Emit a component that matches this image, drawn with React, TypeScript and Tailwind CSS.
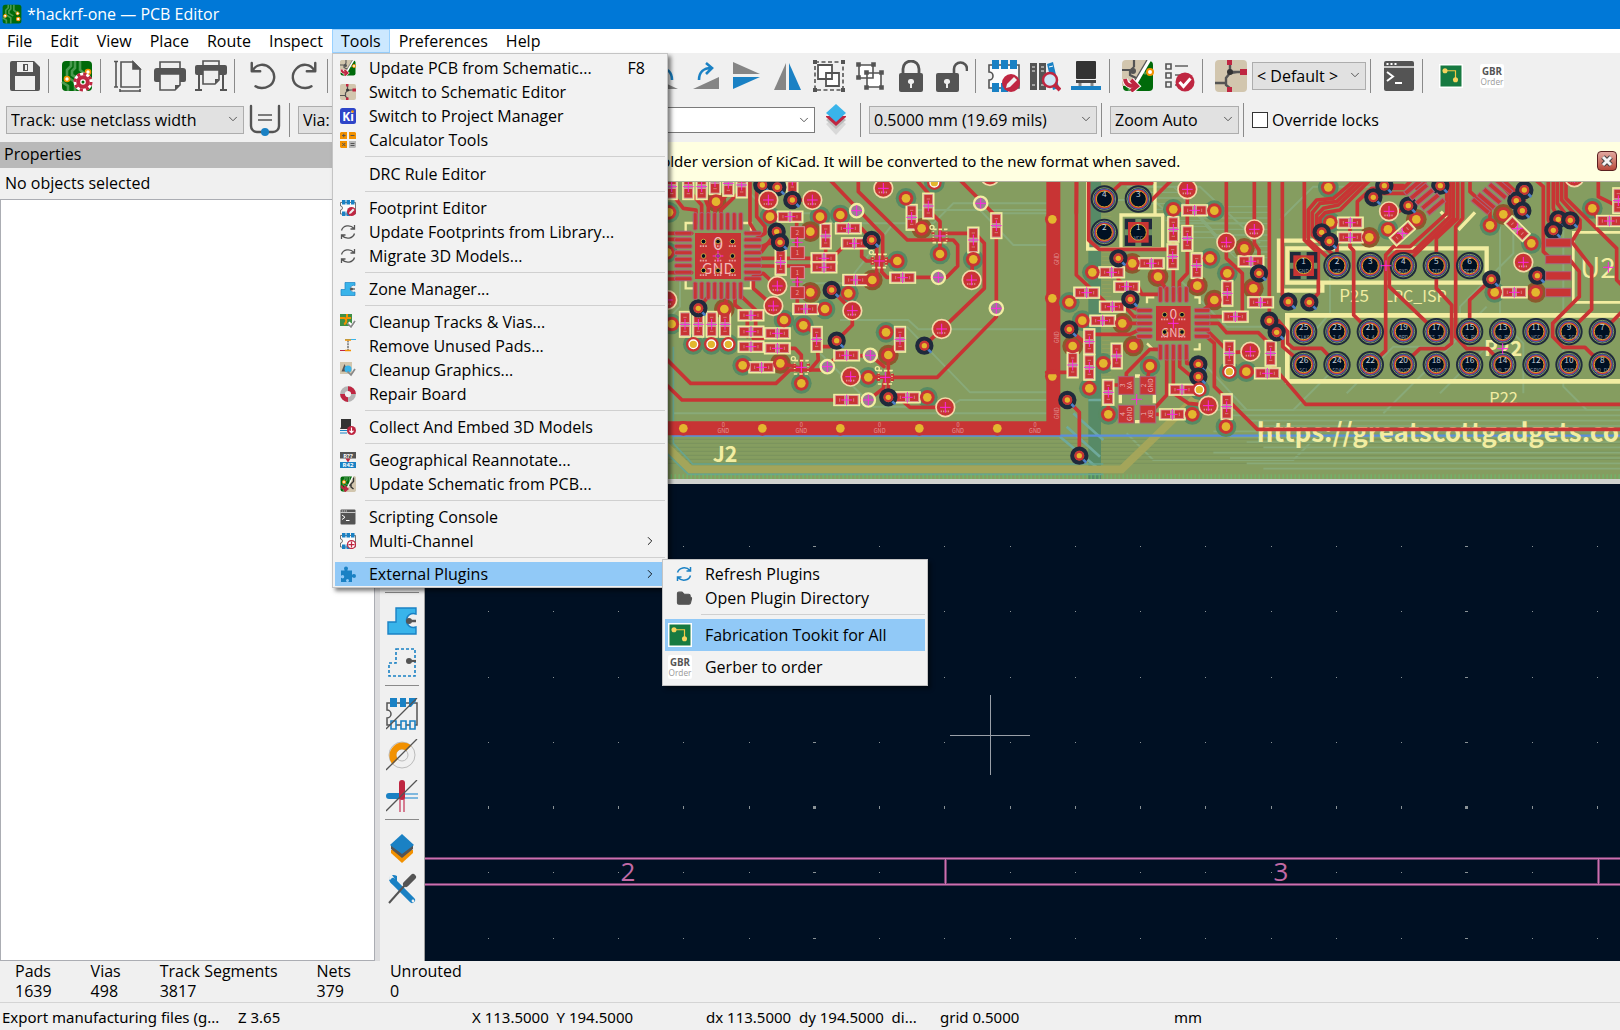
import type { FC, ReactNode } from "react";
import { ChevronDown, ChevronRight, FolderOpen, RefreshCw, Search, ZoomIn, ZoomOut } from "lucide-react";

const DARK = "#545454";
const BLUE = "#1a81c4";
const SKY = "#39b4ea";
const RED = "#bf2641";
const ORANGE = "#f29100";

type Pt = [number, number];

const boardArt = (
  <>
    <rect x="1" y="1" width="30" height="30" rx="4" fill="#006a0a" />
    <path d="M10 1v5l-4 4v7l8 5v9M14 1v7l-3 3v4l7 4M19 1v9l5 4M1 22l6 4v5" stroke="#4a9a4f" strokeWidth="2.6" fill="none" />
  </>
);

const schArt = <rect width="32" height="32" rx="4" fill="#d2c6ae" />;

const footprintArt = (
  <>
    <path d="M5 5H1v7a4 4 0 0 1 0 8v8h30V5z" fill="#fbfbfb" stroke={DARK} strokeWidth="1.6" />
    <path d="M4 0h7v9H4zM13 0h7v9h-7zM22 0h7v9h-7zM4 23h7v9H4zM13 23h7v9h-7z" fill={BLUE} />
  </>
);

const icons: Record<string, ReactNode> = {
  save: (
    <>
      <path d="M3 1h22l6 6v22a2 2 0 0 1-2 2H3a2 2 0 0 1-2-2V3a2 2 0 0 1 2-2z" fill={DARK} />
      <path d="M8 2h16v10H8zM6 16h20v14H6z" fill="#efefef" />
      <path d="M14 4h5v7h-5z" fill={DARK} />
      <path d="M16 5h2v5h-2z" fill="#efefef" />
    </>
  ),
  boardSetup: (
    <>
      {boardArt}
      <circle cx="6" cy="19" r="2.5" fill="#fff" stroke={ORANGE} strokeWidth="1.6" />
      <circle cx="27" cy="12" r="2.5" fill="#fff" stroke={ORANGE} strokeWidth="1.6" />
      <circle cx="22" cy="22" r="5.5" fill="none" stroke="#fff" strokeWidth="8" />
      <circle cx="22" cy="22" r="8" fill="none" stroke={RED} strokeWidth="3" strokeDasharray="3.2 3.08" />
      <circle cx="22" cy="22" r="4.8" fill="none" stroke={RED} strokeWidth="4" />
    </>
  ),
  board: (
    <>
      {boardArt}
      <circle cx="5" cy="19" r="2.4" fill="#fff" stroke={ORANGE} strokeWidth="1.6" />
      <circle cx="26" cy="24" r="2.8" fill="#fff" stroke={ORANGE} strokeWidth="1.8" />
      <circle cx="25" cy="15" r="2.4" fill="#fff" stroke={ORANGE} strokeWidth="1.6" />
    </>
  ),
  page: (
    <g fill="none" stroke={DARK} strokeWidth="1.6">
      <path d="M8 2h12l7 7v18H8z" />
      <path d="M20 2v7h7z" fill={DARK} />
      <path d="M3 2v25M1 1.500h4M1 27h4M7 31h20M7 29v3M27 29v3" />
    </g>
  ),
  print: (
    <>
      <path d="M6 2h20v7H6z" fill="#efefef" stroke={DARK} strokeWidth="1.6" />
      <path d="M3 8h26a3 3 0 0 1 3 3v9a2 2 0 0 1-2 2H2a2 2 0 0 1-2-2v-9a3 3 0 0 1 3-3z" fill={DARK} />
      <path d="M6 14h20v11l-5 5H6z" fill="#efefef" stroke={DARK} strokeWidth="1.600" />
      <path d="M26 25h-5v5z" fill={DARK} />
    </>
  ),
  plot: (
    <>
      <path d="M8 1h16v5H8z" fill="#efefef" stroke={DARK} strokeWidth="1.6" />
      <path d="M2 5h28a2 2 0 0 1 2 2v6a2 2 0 0 1-2 2H2a2 2 0 0 1-2-2V7a2 2 0 0 1 2-2z" fill={DARK} />
      <path d="M4 14v15M28 14v15M0 30h7M25 30h7" stroke={DARK} strokeWidth="2" />
      <path d="M8 10h16v10l-4 4H8z" fill="#efefef" stroke={DARK} strokeWidth="1.6" />
      <path d="M24 19h-4v5z" fill={DARK} />
    </>
  ),
  undo: (
    <g fill="none" stroke={DARK} strokeWidth="2.600" strokeLinecap="round" strokeLinejoin="round">
      <path d="M4 2v9h9" />
      <path d="M5 10C9 3 18 2 24 8c6 6 5 15-2 19-5 3-11 2-14 0" />
    </g>
  ),
  redo: (
    <g fill="none" stroke={DARK} strokeWidth="2.600" strokeLinecap="round" strokeLinejoin="round">
      <path d="M28 2v9h-9" />
      <path d="M27 10C23 3 14 2 8 8c-6 6-5 15 2 19 5 3 11 2 14 0" />
    </g>
  ),
  rotateCcw: (
    <>
      <path d="M3 17v12h26z" fill="#858585" />
      <path d="M23 20c0-8-5-12-12-12M16 3l-6 5 6 6" fill="none" stroke={BLUE} strokeWidth="2.600" />
    </>
  ),
  rotateCw: (
    <>
      <path d="M29 17v12H3z" fill="#858585" />
      <path d="M9 20c0-8 5-12 12-12M16 3l6 5-6 6" fill="none" stroke={BLUE} strokeWidth="2.600" />
    </>
  ),
  mirrorV: (
    <>
      <path d="M2 2l27 12H2z" fill="#858585" />
      <path d="M2 29V17h27z" fill={BLUE} />
    </>
  ),
  mirrorH: (
    <>
      <path d="M14 3v27H2z" fill="#858585" />
      <path d="M17 3v27h12z" fill={BLUE} />
    </>
  ),
  group: (
    <>
      <path d="M2 2h28v28H2z" fill="none" stroke={DARK} strokeWidth="1.600" strokeDasharray="4 2.500" />
      <path d="M0 0h4v4H0zM28 0h4v4h-4zM0 28h4v4H0zM28 28h4v4h-4z" fill={DARK} />
      <path d="M5 5h14v14H5zM13 13h13v13H13z" fill="#fff" stroke={DARK} strokeWidth="1.8" />
    </>
  ),
  ungroup: (
    <g fill="#fff" stroke={DARK} strokeWidth="1.6">
      <path d="M5 5h14v13H5zM13 13h14v14H13z" />
      <path d="M3 3h3v3H3zM18 3h3v3h-3zM3 16h3v3H3zM11 11h3v3h-3zM26 11h3v3h-3zM11 26h3v3h-3zM26 26h3v3h-3z" fill={DARK} />
    </g>
  ),
  lock: (
    <>
      <path d="M8 15V9a8 8 0 0 1 16 0v6" fill="none" stroke={DARK} strokeWidth="2.800" />
      <rect x="4" y="13" width="24" height="19" rx="2" fill={DARK} />
      <path d="M16 19a2.500 2.500 0 0 1 1 5v4h-2v-4a2.500 2.500 0 0 1 1-5z" fill="#efefef" />
    </>
  ),
  unlock: (
    <>
      <path d="M18 15V9a6.500 6.500 0 0 1 13 0v2" fill="none" stroke={DARK} strokeWidth="2.600" />
      <rect x="0" y="13" width="23" height="19" rx="2" fill={DARK} />
      <path d="M11 19a2.500 2.500 0 0 1 1 5v4h-2v-4a2.500 2.500 0 0 1 1-5z" fill="#efefef" />
    </>
  ),
  footprintEditor: (
    <>
      {footprintArt}
      <circle cx="23" cy="23" r="9" fill={RED} />
      <path d="M18 28l1-4 7-7 3 3-7 7z" fill="#efefef" />
    </>
  ),
  library: (
    <>
      <path d="M1 3h7v27H1zM10 3h7v27h-7z" fill={DARK} />
      <path d="M3 7h3M3 11h3M3 25h3M12 7h3M12 11h3M12 25h3" stroke="#efefef" strokeWidth="1.200" />
      <path d="M18 4l6-2 6 26-6 2z" fill={BLUE} />
      <path d="M20 7l4-1" stroke="#fff" />
      <circle cx="21" cy="20" r="7" fill="#cfe6f5" stroke={RED} strokeWidth="2.500" />
      <path d="M26 25l5 5" stroke={RED} strokeWidth="4" />
    </>
  ),
  chip3d: (
    <>
      <path d="M7 1h18a1 1 0 0 1 1 1v16a1 1 0 0 1-1 1H7a1 1 0 0 1-1-1V2a1 1 0 0 1 1-1z" fill="#333" />
      <path d="M6 20h20v3H6z" fill="#444" />
      <path d="M10 23v3M22 23v3" stroke="#888" strokeWidth="3" />
      <path d="M1 26h30v4H1z" fill={BLUE} />
    </>
  ),
  updatePcb: (
    <>
      {boardArt}
      <path d="M4 0h22L10 26H0V4a4 4 0 0 1 4-4z" fill="#d2c6ae" />
      <path d="M0 10h8M12 0v7M12 7l-4 4v4l6 3" fill="none" stroke={DARK} strokeWidth="2.200" />
      <circle cx="11" cy="11" r="3" fill={DARK} />
      <path d="M27 0L10 29" stroke="#fff" strokeWidth="4" />
      <path d="M25 0L9 27" stroke={DARK} strokeWidth="1.300" />
      <circle cx="28" cy="12" r="3" fill="#fff" stroke={ORANGE} strokeWidth="2" />
      <path d="M3 19c1 6 4 7 9 7M9 20l6 6-6 5" fill="none" stroke="#fff" strokeWidth="6" />
      <path d="M3 19c1 6 4 7 9 7M9 20l6 6-6 5" fill="none" stroke={RED} strokeWidth="4" />
    </>
  ),
  updateSch: (
    <>
      {boardArt}
      <path d="M26 0L10 32h18a4 4 0 0 0 4-4V4a4 4 0 0 0-4-4z" fill="#d2c6ae" />
      <path d="M27 3v8l-5 5v6l5 4M22 18h-6" fill="none" stroke="#333" strokeWidth="2.800" />
      <path d="M26 0L12 29" stroke="#fff" strokeWidth="2.500" />
      <circle cx="8" cy="12" r="3" fill="#fff" stroke={ORANGE} strokeWidth="2" />
      <path d="M3 19c1 6 4 7 9 7M9 20l6 6-6 5" fill="none" stroke={RED} strokeWidth="4" />
    </>
  ),
  checklist: (
    <>
      <path d="M3 4h5v5H3zM3 13h5v5H3zM3 22h5v5H3z" fill="none" stroke={DARK} strokeWidth="1.600" />
      <path d="M12 6h13M12 15h8M12 25h4" stroke="#858585" strokeWidth="1.800" />
      <circle cx="22" cy="22" r="9.500" fill={RED} />
      <path d="M16.500 22l4 4.500 7-8" fill="none" stroke="#fff" strokeWidth="3" />
    </>
  ),
  schematic: (
    <>
      {schArt}
      <path d="M0 23h12M15 4v9l7-1M15 13l-4 5v7l5 4M17 12h12" fill="none" stroke={DARK} strokeWidth="2.400" />
      <circle cx="15" cy="12" r="3" fill="#333" />
      <path d="M12 0h5v5h-5zM25 9h7v6h-7zM12 27h5v5h-5z" fill={RED} />
    </>
  ),
  console: (
    <>
      <path d="M3 1h26a2 2 0 0 1 2 2v26a2 2 0 0 1-2 2H3a2 2 0 0 1-2-2V3a2 2 0 0 1 2-2z" fill={DARK} />
      <path d="M1 7h30" stroke="#efefef" strokeWidth="1.500" />
      <path d="M3.500 4h2M7.500 4h2M11.500 4h2M4 12l6 4.500L4 21M12 23h7" fill="none" stroke="#fff" strokeWidth="2" />
    </>
  ),
  fabrication: (
    <>
      <rect width="32" height="32" fill="#fff" />
      <rect x="2" y="2" width="28" height="28" fill="#177a41" />
      <path d="M8 9h14v12" fill="none" stroke="#f5c842" strokeWidth="1.600" />
      <circle cx="8" cy="9" r="3.400" fill="#f7d35e" />
      <circle cx="22" cy="21" r="3.400" fill="#f7d35e" />
    </>
  ),
  gerber: (
    <>
      <rect width="32" height="32" rx="3" fill="#fff" />
      <text x="16" y="14" textAnchor="middle" fontSize="13" fontWeight="700" fill="#555">GBR</text>
      <text x="16" y="28" textAnchor="middle" fontSize="11" fill="#999">Order</text>
    </>
  ),
  kicad: (
    <>
      <rect width="32" height="32" rx="5" fill="#2e45c8" />
      <text x="16" y="25" textAnchor="middle" fontSize="24" fontWeight="700" fill="#fff">Ki</text>
      <circle cx="25" cy="7" r="2.500" fill={ORANGE} />
    </>
  ),
  calculator: (
    <>
      <path d="M2 0h12v14H0V2zM18 0h12l2 2v12H18zM0 18h14v14H2l-2-2z" fill={ORANGE} />
      <path d="M18 18h14v12l-2 2H18z" fill="#b8b8b8" />
      <path d="M4 7h7M7.500 3.500v7M21 7h8M4.500 22l6 6M10.500 22l-6 6M21 23h8M21 27h8" stroke={DARK} strokeWidth="2" />
    </>
  ),
  refresh: (
    <g fill="none" stroke={DARK} strokeWidth="2.600">
      <path d="M3 13C6 3 20 0 28 9M29 2v8h-8M29 19c-3 10-17 13-25 4M3 30v-8h8" />
    </g>
  ),
  refreshBlue: (
    <g fill="none" stroke={BLUE} strokeWidth="3">
      <path d="M3 13C6 3 20 0 28 9M29 2v8h-8M29 19c-3 10-17 13-25 4M3 30v-8h8" />
    </g>
  ),
  puzzle: (
    <path
      d="M2 9h7c1-1-1-2-1-4a4 4 0 0 1 8 0c0 2-2 3-1 4h9v8c1 1 2-1 4-1a4 4 0 0 1 0 8c-2 0-3-2-4-1v9h-7c-1-1 1-2 1-3a3 3 0 0 0-6 0c0 1 2 2 1 3H2v-8c1-1 2 1 3 1a3 3 0 0 0 0-7c-1 0-2 2-3 1z"
      fill={BLUE}
    />
  ),
  zone: (
    <>
      <path d="M10 3h20v6a7 7 0 1 0 0 13v7H2V17h8z" fill={SKY} stroke={BLUE} strokeWidth="1.400" />
      <path d="M22 16h8" stroke={DARK} strokeWidth="2.500" />
      <circle cx="23" cy="16" r="3" fill={DARK} />
    </>
  ),
  zoneOutline: (
    <>
      <path d="M10 3h19v27H3V17h7z" fill="none" stroke={BLUE} strokeWidth="1.600" strokeDasharray="3 2" />
      <path d="M22 15h8" stroke={DARK} strokeWidth="2.200" />
      <circle cx="23" cy="15" r="3" fill={DARK} />
    </>
  ),
  cleanTracks: (
    <>
      <path d="M0 0h24v24H0z" fill="#3f8f45" />
      <path d="M0 8h8c6 0 6 10 0 12M14 0v8h8" fill="none" stroke={ORANGE} strokeWidth="4" />
      <path d="M17 17l8 9M20 28l10-13" stroke="#fff" strokeWidth="6" />
      <path d="M15 19l7 7 8-12" fill="none" stroke="#888" strokeWidth="3.500" />
    </>
  ),
  cleanGraphics: (
    <>
      <path d="M0 0h24v24H0z" fill="#d2c6ae" />
      <path d="M3 19L9 4l7 15z" fill={DARK} />
      <circle cx="16" cy="14" r="7" fill={SKY} />
      <path d="M15 19l7 7 8-12" fill="none" stroke="#888" strokeWidth="3.500" />
    </>
  ),
  unusedPads: (
    <>
      <path d="M16 5v22" stroke="#858585" strokeWidth="3.500" strokeDasharray="4 1.500" />
      <path d="M10 3h22" stroke={SKY} strokeWidth="2" />
      <path d="M0 25h22" stroke={RED} strokeWidth="2" />
      <path d="M10 4h12M10 25h12" stroke={ORANGE} strokeWidth="3" />
    </>
  ),
  repair: (
    <g fill="none" strokeWidth="9.500">
      <circle cx="16" cy="16" r="11" stroke="#b4b4b4" />
      <path d="M16 5a11 11 0 0 1 11 11M16 27A11 11 0 0 1 5 16" stroke={RED} />
    </g>
  ),
  embed: (
    <>
      <path d="M2 0h20v16l2 4H0l2-4z" fill="#333" />
      <path d="M0 23h20M0 28h14" stroke={BLUE} strokeWidth="2" />
      <circle cx="23" cy="23" r="9" fill={RED} />
      <path d="M23 17v10M19 23.500l4 4 4-4" fill="none" stroke="#fff" strokeWidth="2.200" />
    </>
  ),
  reannotate: (
    <>
      <rect width="32" height="13" fill={DARK} />
      <rect y="20" width="32" height="12" fill={BLUE} />
      <text x="16" y="11" textAnchor="middle" fontSize="12" fontWeight="700" fill="#fff">R??</text>
      <text x="16" y="30.500" textAnchor="middle" fontSize="12" fontWeight="700" fill="#fff">R42</text>
      <path d="M11 13h10l-5 8z" fill={RED} />
    </>
  ),
  multiChannel: (
    <>
      {footprintArt}
      <circle cx="23" cy="23" r="8" fill="#fff" stroke={RED} strokeWidth="2.500" />
      <path d="M23 17v12M17 23h12" stroke={RED} strokeWidth="2.500" />
    </>
  ),
  footprintOff: (
    <>
      <path d="M5 5H1v7a4 4 0 0 1 0 8v7h30V5z" fill="none" stroke={DARK} strokeWidth="1.500" />
      <path d="M4 0h7v9H4zM14 0h6v9h-6zM23 0h7v3l-5 6h-2z" fill={BLUE} />
      <path d="M5 23h5v8H5zM15 23h5v8h-5zM24 23h5v8h-5z" fill="#efefef" stroke={BLUE} strokeWidth="1.600" />
      <path d="M0 31L31 0" stroke={DARK} strokeWidth="1.300" />
    </>
  ),
  viaOff: (
    <>
      <circle cx="16" cy="16" r="13" fill="none" stroke="#bbb" />
      <circle cx="16" cy="16" r="6" fill="none" stroke="#bbb" />
      <path d="M6.500 25.500a13.500 13.500 0 0 1 19-19l-5.500 5.500a5.500 5.500 0 0 0-8 8z" fill={ORANGE} />
      <path d="M0 31L31 0" stroke={DARK} strokeWidth="1.300" />
    </>
  ),
  trackOff: (
    <>
      <path d="M16 14h16M16 18h16" stroke="#5aa5d8" strokeWidth="1.600" />
      <path d="M14 17v15M18 17v15" stroke="#d0607a" strokeWidth="1.600" />
      <path d="M3 16h12" stroke={BLUE} strokeWidth="6" strokeLinecap="round" />
      <path d="M16 3v14" stroke={RED} strokeWidth="6" strokeLinecap="round" />
      <path d="M0 31L31 0" stroke={DARK} strokeWidth="1.300" />
    </>
  ),
  layers: (
    <>
      <path d="M5 18v3l11 10 11-10v-3z" fill={ORANGE} />
      <path d="M5 13v4l11 9 11-9v-4z" fill={DARK} />
      <path d="M16 2l12 11-12 9L4 13z" fill={BLUE} />
    </>
  ),
  layerPair: (
    <>
      <path d="M6 20l10-8 10 8-10 11z" fill="#d8d8d8" />
      <path d="M6 16l10-8 10 8-10 9z" fill="#bcbcbc" />
      <path d="M6 13l10 9 10-9v-1H6z" fill={RED} />
      <path d="M16 0l10 9-10 9L6 9z" fill={SKY} />
    </>
  ),
  toolsCross: (
    <>
      <path d="M7 8l19 19" stroke={BLUE} strokeWidth="6" strokeLinecap="round" />
      <path d="M4 3a7 7 0 0 0 9 9l-2-3V3a7 7 0 0 0-5-1l3 4-2 3-4-1z" fill={BLUE} />
      <circle cx="27" cy="28" r="1.400" fill="#efefef" />
      <path d="M3 30l16-18" stroke={DARK} strokeWidth="2" />
      <path d="M20 11l7-7" stroke={DARK} strokeWidth="6" strokeLinecap="round" />
    </>
  ),
  trackWidth: (
    <>
      <path d="M2 2v20a6 6 0 0 0 6 6h16a6 6 0 0 0 6-6V2" fill="none" stroke={DARK} strokeWidth="2.400" strokeLinecap="round" />
      <path d="M9 11h14M9 16h14" stroke={DARK} strokeWidth="1.600" />
      <circle cx="16" cy="28" r="4" fill={BLUE} />
    </>
  ),
};

const Icon: FC<{ name: string; size: number }> = ({ name, size }) => (
  <svg width={size} height={size} viewBox="0 0 32 32" className="shrink-0" aria-hidden="true">
    {icons[name]}
  </svg>
);

const ToolButton: FC<{ label: string; children: ReactNode }> = ({ label, children }) => (
  <button aria-label={label} className="flex h-[41px] w-[41px] shrink-0 items-center justify-center text-[#545454]">
    {children}
  </button>
);

const Sep: FC = () => <span className="ml-[3px] mr-[7px] h-[34px] w-px shrink-0 bg-[#8a8a8a]" />;
const WideSep: FC = () => <span className="ml-1 mr-2 h-[34px] w-px shrink-0 bg-[#8a8a8a]" />;
const RowSep: FC = () => <span className="mb-[7px] mt-[3px] h-px w-[34px] shrink-0 bg-[#8a8a8a]" />;

interface ComboProps {
  label: string;
  value: string;
  className: string;
}

const Combo: FC<ComboProps> = ({ label, value, className }) => (
  <div className={`relative shrink-0 ${className}`}>
    <select aria-label={label} className="h-full w-full appearance-none border border-[#adadad] bg-[#e1e1e1] pl-1 pr-6">
      <option>{value}</option>
    </select>
    <ChevronDown size={14} strokeWidth={1.5} className="pointer-events-none absolute right-1 top-1.5 text-[#444]" />
  </div>
);

interface MenuEntry {
  label: string;
  icon?: string;
  keys?: string;
  sub?: boolean;
}

const menuGroups: MenuEntry[][] = [
  [
    { label: "Update PCB from Schematic...", icon: "updatePcb", keys: "F8" },
    { label: "Switch to Schematic Editor", icon: "schematic" },
    { label: "Switch to Project Manager", icon: "kicad" },
    { label: "Calculator Tools", icon: "calculator" },
  ],
  [{ label: "DRC Rule Editor" }],
  [
    { label: "Footprint Editor", icon: "footprintEditor" },
    { label: "Update Footprints from Library...", icon: "refresh" },
    { label: "Migrate 3D Models...", icon: "refresh" },
  ],
  [{ label: "Zone Manager...", icon: "zone" }],
  [
    { label: "Cleanup Tracks & Vias...", icon: "cleanTracks" },
    { label: "Remove Unused Pads...", icon: "unusedPads" },
    { label: "Cleanup Graphics...", icon: "cleanGraphics" },
    { label: "Repair Board", icon: "repair" },
  ],
  [{ label: "Collect And Embed 3D Models", icon: "embed" }],
  [
    { label: "Geographical Reannotate...", icon: "reannotate" },
    { label: "Update Schematic from PCB...", icon: "updateSch" },
  ],
  [
    { label: "Scripting Console", icon: "console" },
    { label: "Multi-Channel", icon: "multiChannel", sub: true },
  ],
];

const MenuRule: FC = () => (
  <div className="flex h-[9px] items-center pl-[30px]">
    <span className="h-px w-full bg-[#d0d0d0]" />
  </div>
);

const MenuRow: FC<{ entry: MenuEntry }> = ({ entry }) => (
  <button role="menuitem" className={`flex w-full items-center pl-[5px] pr-2 text-left ${entry.icon ? "h-6" : "h-[26px]"}`}>
    <span className="w-[29px]">{entry.icon && <Icon name={entry.icon} size={16} />}</span>
    <span className="flex-1">{entry.label}</span>
    {entry.keys && <span className="pr-3">{entry.keys}</span>}
    {entry.sub && <ChevronRight size={14} strokeWidth={1.5} />}
  </button>
);

const PluginsMenu: FC = () => (
  <div role="menu" className="absolute left-[327px] -top-[3px] z-30 w-[266px] border border-[#c4c4c4] bg-[#f2f2f2] p-0.5 shadow-[3px_3px_4px_rgba(0,0,0,0.4)]">
    <button role="menuitem" className="flex h-6 w-full items-center pl-[11px] text-left">
      <span className="w-[29px]">
        <Icon name="refreshBlue" size={16} />
      </span>
      Refresh Plugins
    </button>
    <button role="menuitem" className="flex h-6 w-full items-center pl-[11px] text-left">
      <span className="w-[29px]">
        <FolderOpen size={17} fill="#545454" stroke="#545454" strokeWidth={1.5} />
      </span>
      Open Plugin Directory
    </button>
    <div className="flex h-[9px] items-center pl-9">
      <span className="h-px w-full bg-[#d0d0d0]" />
    </div>
    <button role="menuitem" className="flex h-8 w-full items-center bg-[#91c9f7] pl-[3px] text-left">
      <span className="w-[37px]">
        <Icon name="fabrication" size={24} />
      </span>
      Fabrication Tookit for All
    </button>
    <button role="menuitem" className="flex h-8 w-full items-center pl-[3px] text-left">
      <span className="w-[37px]">
        <Icon name="gerber" size={24} />
      </span>
      Gerber to order
    </button>
  </div>
);

const ToolsMenu: FC = () => (
  <div role="menu" className="absolute left-0 top-full z-20 w-[336px] border border-[#c4c4c4] bg-[#f2f2f2] px-0.5 pb-px pt-0.5 shadow-[3px_3px_4px_rgba(0,0,0,0.5)]">
    {menuGroups.map((group, i) => (
      <div key={i}>
        {group.map((entry) => (
          <MenuRow key={entry.label} entry={entry} />
        ))}
        <MenuRule />
      </div>
    ))}
    <div className="relative">
      <button role="menuitem" className="flex h-6 w-full items-center bg-[#91c9f7] pl-[5px] pr-2 text-left">
        <span className="w-[29px]">
          <Icon name="puzzle" size={16} />
        </span>
        <span className="flex-1">External Plugins</span>
        <ChevronRight size={14} strokeWidth={1.5} />
      </button>
      <PluginsMenu />
    </div>
  </div>
);

/* ---------- board drawing ---------- */

type ViaKind = "g" | "o" | "d" | "w" | "b";
type Hole = [number, number, string, string?];

interface Section {
  dx: number;
  tracks: string[];
  vias: Partial<Record<ViaKind, Pt[]>>;
  testPads: Pt[];
  rings?: Pt[];
  flat: Pt[];
  upright: Pt[];
}

const sections: Section[] = [
  {
    dx: 0,
    tracks: [
      "0,518 92,610 348,610 390,570 500,570", "0,596 66,660 625,660 670,625 676,592 832,592 1009,410 1009,110 900,0",
      "845,448 973,325 973,190 945,160 840,160 840,125 805,90 805,40 770,0", "793,497 845,448", "510,0 668,165 668,240",
      "595,0 595,35 742,180 840,180 880,180 893,195 893,258 860,292 680,292 665,275 665,250", "305,235 490,235 525,225 560,190 605,190 605,230 620,243 712,243",
      "305,258 490,258", "565,145 605,145 635,180 650,200 650,290 637,300 590,300", "515,330 577,392 577,435 530,482 510,500 470,500",
      "248,556 305,562 361,550 424,565 424,610", "352,505 405,505 424,525 424,565", "470,480 475,540 450,570", "502,560 530,530 631,526 672,560",
      "720,480 685,525 685,652 802,652", "715,652 750,682 856,682", "280,290 310,280 350,318", "280,290 280,325 340,378", "305,215 350,155", "305,200 325,190 360,187",
      "270,0 270,130 285,155", "290,0 290,110 315,140 315,160 285,178", "225,330 225,375 262,405 262,470", "245,350 287,390 287,450", "397,0 397,60 457,60",
      "115,385 145,350", "193,387 203,340", "0,160 95,160", "0,278 95,278", "0,297 60,297", "0,178 50,178", "35,40 70,85 108,90 108,130", "85,30 125,75 125,110",
      "125,30 145,80 145,110", "245,30 183,90 183,120", "205,40 165,80 165,110", "330,110 410,105 410,235", "412,260 412,385 495,387", "430,436 465,460 470,478",
      "372,420 372,460 310,475 280,475", "738,55 755,90 755,130 785,145", "935,300 940,180", "480,110 497,140 497,235", "572,590 676,592", "325,60 290,60", "840,160 840,222",
    ],
    vias: {
      g: [[27, 97], [330, 110], [480, 110], [541, 105], [738, 55], [840, 222], [712, 243], [940, 238], [565, 340], [495, 387], [372, 420], [430, 436], [35, 432], [248, 556], [424, 610], [625, 592], [678, 457], [802, 652], [22, 217]],
      o: [[168, 65], [451, 155], [451, 337], [637, 300], [193, 387], [785, 145], [361, 550], [685, 525]],
      d: [[350, 155], [360, 187], [397, 60], [307, 15], [352, 22], [515, 330], [530, 482], [635, 180], [793, 497], [685, 652], [115, 385]],
      w: [[100, 493], [154, 493], [205, 493], [823, 8]],
      b: [[70, 745], [307, 745], [541, 745], [778, 745], [1012, 745], [1177, 118], [1177, 355], [1177, 589]],
    },
    testPads: [[325, 60], [457, 60], [670, 25], [935, 300], [352, 318], [340, 378], [577, 392], [845, 447], [572, 590], [856, 682], [22, 360], [990, -12]],
    rings: [[590, 92], [962, 70], [835, 292], [1009, 385], [502, 560], [631, 526], [625, 660]],
    flat: [[390, 110], [565, 145], [583, 190], [587, 300], [728, 293], [437, 387], [352, 460], [352, 505], [305, 562], [560, 526], [560, 660], [742, 652], [273, 406], [492, 235], [492, 262], [273, 455], [273, 500]],
    upright: [[497, 168], [362, 247], [470, 478], [720, 478], [940, 180], [1009, 137], [805, 78], [755, 112], [75, 433], [115, 433], [155, 433], [195, 433], [35, 20], [85, 20], [125, 20], [165, 5], [205, 10], [245, 15], [397, 0]],
  },
  {
    dx: 1200,
    tracks: [
      "49,0 49,285 150,380 195,380 222,410 240,410", "86,0 86,180 118,208 340,208", "133,57 183,10 275,10", "235,57 275,60 335,0", "382,30 382,280 358,305 358,340",
      "340,90 340,340", "463,92 340,90", "499,0 499,235 547,280 547,410 440,410", "583,0 583,190 597,210 597,280",
      "628,0 628,422 655,422 683,455 683,490 700,505 785,505 831,554", "667,0 667,345 685,365", "733,0 733,180 775,220 775,340 748,367",
      "410,430 475,430 500,458 595,458 632,495 640,560 737,673 1700,673", "440,470 463,490 463,620 592,748 1700,748", "440,450 508,518 570,515",
      "175,235 175,300 200,320 235,320 245,343 300,343", "211,358 211,380 240,392", "28,448 88,500 88,625", "88,463 210,463 240,448", "67,422 187,430 240,430",
      "199,615 199,580 270,508 300,508", "320,500 320,645 270,700", "340,500 340,640 385,670 445,676", "359,520 359,560 395,590 415,590", "380,520 380,550 415,553",
      "650,457 668,475 668,500 730,553", "22,660 58,697 58,827", "285,703 397,703", "145,703 145,615 180,615", "-40,577 38,577 38,500", "50,0 49,100",
      "270,558 262,600", "130,550 170,535", "412,317 410,235 450,235", "463,360 502,350 502,280", "463,365 430,390", "217,250 280,255 294,290 320,330", "97,277 155,277",
      "220,498 240,470", "553,205 573,244", "580,325 602,367", "498,740 500,660", "559,575 622,580",
    ],
    vias: {
      g: [[340, 88], [463, 92], [97, 277], [450, 235], [502, 280], [28, 367], [67, 422], [130, 550], [270, 558], [88, 625], [145, 703], [397, 703], [498, 740], [559, 575]],
      o: [[217, 250], [463, 360], [187, 430], [220, 498], [38, 498], [412, 317], [294, 290], [553, 205], [580, 325]],
      d: [[175, 235], [211, 358], [597, 280], [628, 422], [650, 457], [415, 553], [415, 590], [22, 660], [58, 827], [685, 365], [748, 367], [28, 448]],
      w: [[508, 575], [418, 629]],
    },
    testPads: [[382, 28], [499, 187], [583, 148], [571, 515], [445, 677]],
    flat: [[404, 91], [274, 250], [155, 277], [200, 320], [80, 338], [157, 380], [128, 422], [573, 244], [602, 367], [526, 410], [622, 580], [366, 629], [337, 703]],
    upright: [[340, 148], [382, 175], [338, 230], [410, 257], [502, 340], [88, 485], [88, 562], [170, 528], [38, 555], [145, 637], [508, 520], [632, 520], [500, 680]],
  },
  {
    dx: 1830,
    tracks: [
      "255,0 190,55 140,60 115,90 115,180 201,257", "270,0 200,65 150,70 127,98 127,165 201,235", "285,0 205,75 160,85 140,105 140,150 155,157", "300,0 210,90 165,98 150,115 150,155 178,184",
      "262,140 262,65 305,25 400,25 425,0", "343,17 400,17", "310,50 330,40 410,40 450,0", "415,77 385,95 360,95", "439,118 415,80", "201,257 201,190 240,172",
      "240,128 240,200 251,212 251,405 301,455", "530,0 530,100 420,200 370,200 347,225 347,512 301,554", "540,0 540,110 430,215 380,215 358,235 358,320 499,455",
      "550,0 550,115 400,257", "563,0 563,115 499,175 499,325 545,375 545,490 525,506 450,506 400,554", "578,0 578,115 557,140 557,470 590,506 655,506 698,554",
      "599,455 599,360 664,298", "600,0 600,35 660,90 660,135", "797,0 820,20 820,215 845,238 865,238", "835,0 835,120 850,150", "850,0 850,85 865,118", "862,0 862,70 901,121",
      "875,0 875,60 930,120 930,145 905,185 965,262 965,388 897,455", "888,0 888,55 1040,205 1040,300 1080,340", "865,238 900,240 928,275 928,350 848,430 848,470 880,502 945,502 997,554",
      "997,455 1080,370", "985,0 985,50 1045,80", "674,337 800,337", "760,247 802,287 865,287", "181,127 241,128", "241,172 298,172", "354,148 397,160 439,118", "700,103 784,190", "967,85 985,120 1018,123",
      "470,0 440,25", "700,0 763,60", "680,0 739,62",
    ],
    vias: {
      g: [[181, 127], [354, 148], [660, 136], [175, 22], [784, 190], [674, 337], [967, 85]],
      o: [[298, 172], [439, 118], [700, 103], [797, 337]],
      d: [[155, 157], [178, 184], [310, 52], [343, 17], [415, 77], [511, 17], [763, 30], [739, 62], [757, 92], [865, 118], [901, 121], [850, 151], [802, 287], [664, 298]],
    },
    testPads: [[357, 94], [760, 247], [913, -8]],
    flat: [[241, 128], [241, 172], [733, 337], [1018, 123]],
    upright: [[1045, 62]],
  },
];

const headerPins: Hole[] = [
  [101, 257, "1", "GND"], [201, 257, "2", "ISP"], [301, 257, "3", "x"], [400, 257, "4", "RXD"], [499, 257, "5", "TXD"], [599, 257, "6", "RESE"],
  [101, 455, "25", "CLK6"], [201, 455, "23", "2_6"], [301, 455, "21", "2_4"], [400, 455, "19", "BRD"], [499, 455, "17", "SS_TX"], [599, 455, "15", "SS_RX"], [698, 455, "13", "U0_RX"], [798, 455, "11", "VCC"], [897, 455, "9", "SS_SCK"], [997, 455, "7", "SD_D"],
  [101, 554, "26", "SCL"], [201, 554, "24", "SDA"], [301, 554, "22", "2_10"], [400, 554, "20", "BOOT"], [499, 554, "18", "GND"], [599, 554, "16", "SCK"], [698, 554, "14", "U0_TX"], [798, 554, "12", "GPIO"], [897, 554, "10", "GND"], [997, 554, "8", "SD_D2"],
];

const chips: Pt[] = [[658, 243], [840, 168], [424, 562], [676, 592]];

const COPPER = "#c83434";
const SILK = "#f2eda1";

const Via: FC<{ at: Pt; kind: ViaKind }> = ({ at: [x, y], kind }) => {
  if (kind === "d") {
    return (
      <g>
        <circle cx={x} cy={y} r="21" fill="none" stroke="#1f2a3c" strokeWidth="13" />
        <path d={`M${x + 12} ${y + 12}l9 9`} stroke="#4d7fc4" strokeWidth="8" />
        <circle cx={x} cy={y} r="15" fill={COPPER} />
        <circle cx={x} cy={y} r="8" fill="#e3b72e" />
      </g>
    );
  }
  return (
    <g>
      <circle cx={x} cy={y} r="22" fill={COPPER} />
      <circle cx={x} cy={y} r="13" fill="#e3b72e" stroke={kind === "w" ? "#fff" : "none"} strokeWidth="4" />
    </g>
  );
};

const Cross: FC<{ at: Pt }> = ({ at: [x, y] }) => <path d={`M${x - 16} ${y}h32M${x} ${y - 16}v32`} stroke="#ff26e2" strokeWidth="3" />;

const Part: FC<{ at: Pt; turn: number }> = ({ at: [x, y], turn }) => (
  <g>
    <g transform={`translate(${x} ${y}) rotate(${turn})`}>
      <rect x="-38" y="-16" width="76" height="32" fill="#a6a485" stroke={SILK} strokeWidth="5" />
      <rect x="-34" y="-13" width="28" height="26" fill={COPPER} stroke="#e0a5a8" strokeWidth="2" />
      <rect x="6" y="-13" width="28" height="26" fill={COPPER} stroke="#e0a5a8" strokeWidth="2" />
      <path d="M-21 -5v10M21 -5v10" stroke="#d97c7c" strokeWidth="3" />
    </g>
    <Cross at={[x, y]} />
  </g>
);

const TestPad: FC<{ at: Pt }> = ({ at: [x, y] }) => (
  <g>
    <circle cx={x} cy={y} r="28" fill={COPPER} stroke="#f3d9a8" strokeWidth="5" />
    <path d={`M${x - 14} ${y + 12}h28`} stroke="#df9090" strokeWidth="5" strokeDasharray="4 3" />
    <Cross at={[x, y]} />
  </g>
);

const PinHole: FC<{ pin: Hole; square?: boolean }> = ({ pin: [x, y, num, net], square }) => (
  <g>
    {square ? (
      <>
        <rect x={x - 41} y={y - 41} width="82" height="82" fill="#1f2a3c" />
        <path d={`M${x - 41} ${y}h82M${x} ${y - 41}v82`} stroke="#6d8f62" strokeWidth="18" />
        <rect x={x - 31} y={y - 31} width="62" height="62" fill={COPPER} />
      </>
    ) : (
      <>
        <circle cx={x} cy={y} r="41" fill="#1f2a3c" />
        <circle cx={x} cy={y} r="34" fill="none" stroke="#7d9a60" strokeWidth="3" />
        <circle cx={x} cy={y} r="30" fill={COPPER} stroke="#4a62b8" strokeWidth="3" />
      </>
    )}
    <circle cx={x} cy={y} r="24" fill="#001023" stroke="#d8a52c" strokeWidth="3" />
    <text x={x} y={y - 6} textAnchor="middle" fontSize="25" fill="#c6cfd8">{num}</text>
    <text x={x} y={y + 22} textAnchor="middle" fontSize="15" fill="#8795a6">{net}</text>
  </g>
);

const QuadPads: FC<{ cx: number; cy: number; half: number; gap: number; len: number; n: number; pitch: number; vias: number[] }> = ({ cx, cy, half, gap, len, n, pitch, vias }) => (
  <g>
    {Array.from({ length: n }, (_, i) => (i - (n - 1) / 2) * pitch).map((o) => (
      <g key={o} fill={COPPER} stroke="#a8627a" strokeWidth="3">
        <rect x={cx + o - 6} y={cy - half - gap - len} width="12" height={len} rx="4" />
        <rect x={cx + o - 6} y={cy + half + gap} width="12" height={len} rx="4" />
        <rect x={cx - half - gap - len} y={cy + o - 6} width={len} height="12" rx="4" />
        <rect x={cx + half + gap} y={cy + o - 6} width={len} height="12" rx="4" />
      </g>
    ))}
    <rect x={cx - half} y={cy - half} width={half * 2} height={half * 2} fill={COPPER} />
    <text x={cx} y={cy + half * 0.78} textAnchor="middle" fontSize={half * 0.66} fill="#f0b8b8">GND</text>
    <text x={cx} y={cy - half * 0.25} textAnchor="middle" fontSize={half * 0.8} fill="#f0b8b8">0</text>
    {vias.map((a) =>
      vias.map((b) => (
        <g key={`${a}:${b}`}>
          <circle cx={cx + a * half} cy={cy + b * half} r="7" fill="#001023" stroke="#c9a040" strokeWidth="3" />
          <path d={`M${cx + a * half - 11} ${cy + b * half + 14}h22`} stroke="#e4a0a0" strokeWidth="5" strokeDasharray="5 3" />
        </g>
      )),
    )}
    <Cross at={[cx, cy]} />
  </g>
);

const innerTraces = [
  "0,440 60,380 60,300", "230,0 330,100 460,100", "440,60 520,130 820,130 880,70 1160,70", "960,90 1060,195 1160,195", "760,90 1160,90", "1010,100 1160,100", "540,420 745,420 775,448 1160,448",
  "740,440 930,637 1160,637", "480,520 640,680 870,680 900,660 1160,660", "40,700 1160,700", "430,310 560,310 700,130", "1330,60 1480,60 1560,130 1780,130", "1400,20 1620,20 1800,190",
  "1560,300 1700,440 1860,440", "1640,560 1760,690 1900,690 2060,530", "1860,120 1960,20 2200,20", "2060,640 2200,500 2360,500 2480,380", "2170,700 2400,470 2400,380 2560,220 2560,60", "2340,640 2480,500",
  "1940,580 1940,480 2010,400 2010,200", "2520,140 2520,420 2590,490 2590,640", "2650,0 2650,120", "2710,150 2710,620 2780,690 2880,690", "1400,760 1480,840 1900,840 2000,740",
];

const Board: FC = () => (
  <g transform="translate(660 180) scale(0.33333)" fontFamily="'Noto Sans CJK SC','Liberation Sans',sans-serif">
    <rect x="-800" y="0" width="3900" height="912" fill="#d0d2ce" />
    <rect x="-800" y="0" width="3900" height="897" fill="#859d60" />
    <g fill="none" stroke="#89aa79" strokeWidth="6">
      {innerTraces.map((p) => (
        <polyline key={p} points={p} />
      ))}
      {Array.from({ length: 7 }, (_, i) => (
        <path key={i} d={`M-100 ${778 + i * 12}H3000`} stroke="#79935d" strokeWidth="3" />
      ))}
      {Array.from({ length: 12 }, (_, i) => (
        <path key={i} d={`M${1660 + (i % 4) * 50} ${690 + i * 16}H3000`} strokeWidth="5" />
      ))}
      {Array.from({ length: 10 }, (_, i) => (
        <path key={i} d={`M${1420 + i * 16} ${20 + i * 17}H${1540 + i * 14}l60 60H1830`} strokeWidth="4" />
      ))}
    </g>
    <rect x="1285" y="0" width="38" height="897" fill="#578a66" />
    <path d="M1200 770l120 100M1220 740l100 90M1240 700l90 80M1285 660h38" stroke="#6fa99b" strokeWidth="8" />
    <path d="M1340 0V720" stroke="#a3a55a" strokeWidth="28" strokeDasharray="2 10" opacity="0.6" />
    <path d="M0 780L90 868H1385L1620 640" fill="none" stroke="#a3a55a" strokeWidth="23" />
    <path d="M40 500V790L98 852H1330M0 800L85 883H1330" fill="none" stroke="#67a48f" strokeWidth="5" />
    <path d="M-100 890H3000" stroke="#6dbb6b" strokeWidth="14" strokeDasharray="3 9" />
    <path d="M35 767H3000" stroke="#5b8fdc" strokeWidth="7" />
    <path d="M-100 745H1180V-10" fill="none" stroke={COPPER} strokeWidth="42" />
    {[190, 424, 659, 894, 1125].map((x) => (
      <text key={x} x={x} y="760" textAnchor="middle" fontSize="17" fill="#e29a9a">
        <tspan x={x} dy="-20">0</tspan>
        <tspan x={x} dy="20">GND</tspan>
      </text>
    ))}
    {[237, 472, 700].map((y) => (
      <text key={y} x="0" y="0" transform={`translate(1196 ${y}) rotate(-90)`} textAnchor="middle" fontSize="17" fill="#e29a9a">GND</text>
    ))}

    <g fill="none" stroke={SILK} strokeWidth="10">
      <path d="M77 155v-26h28M245 129h28v26M77 300v25h28M245 325h28v-25" strokeWidth="7" />
      <path d="M1283 0V207H1508V105H1383V207M1485 0V105" />
      <path d="M1461 370v-18h22M1603 352h16v20M1619 490v18h-18M1461 490l16 16" strokeWidth="7" />
      <path d="M1381 640v30M1483 640v30M1425 588h15M1425 725h15" />
      <path d="M1882 205h598v103h-598zM1987 182h-130v150h130v-20" strokeWidth="13" />
      <path d="M1882 406h1200v198h-1200z" strokeWidth="14" />
      <path d="M3000 157H2740V367H3000" strokeWidth="8" />
      <path d="M2342 95l20 20M2395 150l50-53" />
    </g>
    <g fill={SILK}>
      <text x="158" y="847" fontSize="64" fontWeight="700">J2</text>
      <text x="2038" y="366" fontSize="51">P25</text>
      <text x="2173" y="366" fontSize="48">LPC_ISP</text>
      <text x="2760" y="294" fontSize="84">U2</text>
      <text x="2472" y="527" fontSize="62" fontWeight="700">P22</text>
      <text x="2488" y="672" fontSize="49">P22</text>
      <text x="1790" y="785" fontSize="78" fontWeight="700">https://greatscottgadgets.co</text>
    </g>

    {sections.map((s) => (
      <g key={s.dx} transform={`translate(${s.dx} 0)`}>
        {Object.entries(s.vias).map(([kind, pts]) =>
          pts.map(
            (p) =>
              kind !== "b" &&
              kind !== "d" && <circle key={`${p}`} cx={p[0]} cy={p[1]} r="31" fill={kind === "o" ? "#8a5a2c" : "#578a63"} />,
          ),
        )}
        <g fill="none" stroke={COPPER} strokeWidth="11" strokeLinejoin="round" strokeLinecap="round">
          {s.tracks.map((p) => (
            <polyline key={p} points={p} />
          ))}
        </g>
        {s.flat.map((p) => (
          <Part key={`${p}`} at={p} turn={0} />
        ))}
        {s.upright.map((p) => (
          <Part key={`${p}`} at={p} turn={90} />
        ))}
        {Object.entries(s.vias).map(([kind, pts]) => pts.map((p) => <Via key={`${p}`} at={p} kind={kind as ViaKind} />))}
        {s.testPads.map((p) => (
          <TestPad key={`${p}`} at={p} />
        ))}
        {s.rings?.map((p) => (
          <g key={`${p}`}>
            <circle cx={p[0]} cy={p[1]} r="20" fill="#9a7f92" stroke={SILK} strokeWidth="7" />
            <Cross at={p} />
          </g>
        ))}
      </g>
    ))}
    {chips.map(([x, y]) => (
      <g key={x}>
        <path d={`M${x - 20} ${y - 20}h40v40h-40z`} fill="none" stroke={SILK} strokeWidth="5" strokeDasharray="10 6" />
        <path d={`M${x - 26} ${y - 8}h10M${x - 26} ${y + 8}h10M${x + 16} ${y - 8}h10M${x + 16} ${y + 8}h10`} stroke={COPPER} strokeWidth="6" />
        <circle cx={x - 24} cy={y - 26} r="6" fill="none" stroke={SILK} strokeWidth="4" />
        <Cross at={[x, y]} />
      </g>
    ))}
    {[140, 200, 260, 320].map((y) => (
      <g key={y}>
        <rect x="392" y={y} width="41" height="36" fill={COPPER} stroke="#d795a0" strokeWidth="3" />
        <text x="412" y={y + 25} textAnchor="middle" fontSize="20" fill="#e6a0a0">{y === 140 || y === 320 ? "2" : "1"}</text>
      </g>
    ))}
    <Cross at={[412, 187]} />
    <Cross at={[412, 306]} />
    <QuadPads cx={174} cy={228} half={69} gap={9} len={52} n={8} pitch={19.5} vias={[-0.63, 0, 0.63]} />
    <QuadPads cx={1540} cy={430} half={52} gap={11} len={47} n={5} pitch={19.5} vias={[-0.5, 0.5]} />
    {[1375, 1440].map((x) => (
      <g key={x} fill={COPPER} stroke="#a8627a" strokeWidth="3">
        <rect x={x} y="590" width="47" height="53" />
        <rect x={x} y="676" width="47" height="53" />
        <g fill="#eab4b4" stroke="none" fontSize="20" textAnchor="middle">
          <text transform={`translate(${x + 19} 616) rotate(-90)`}>{x === 1375 ? "3" : "2"}</text>
          <text transform={`translate(${x + 40} 616) rotate(-90)`}>{x === 1375 ? "XA" : "GND"}</text>
          <text transform={`translate(${x + 19} 702) rotate(-90)`}>{x === 1375 ? "4" : "1"}</text>
          <text transform={`translate(${x + 40} 702) rotate(-90)`}>{x === 1375 ? "GND" : "XB"}</text>
        </g>
      </g>
    ))}
    <Cross at={[1430, 658]} />
    <g transform="translate(1200 0)">
      <PinHole pin={[133, 57, "4"]} />
      <PinHole pin={[235, 57, "3"]} />
      <PinHole pin={[133, 157, "2"]} />
      <PinHole pin={[235, 157, "1", "VCC"]} square />
    </g>
    <g transform="translate(1830 0)">
      {headerPins.map((pin) => (
        <PinHole key={pin[2]} pin={pin} square={pin[2] === "1"} />
      ))}
      {[0, 1, 2, 3, 4].map((i) => (
        <g key={i} fill={COPPER} stroke="#a8627a" strokeWidth="3">
          <rect x="-32" y="-7" width="64" height="14" transform={`translate(${498 - i * 17} ${80 - i * 15}) rotate(-40)`} />
          <rect x="-32" y="-7" width="64" height="14" transform={`translate(${632 + i * 17} ${78 - i * 15}) rotate(40)`} />
        </g>
      ))}
      {[176, 226, 275, 325].map((y) => (
        <rect key={y} x="827" y={y} width="76" height="25" fill={COPPER} stroke="#a8627a" strokeWidth="3" />
      ))}
      <Part at={[397, 160]} turn={-42} />
      <Part at={[742, 146]} turn={45} />
      <Cross at={[348, 257]} />
      <Cross at={[698, 506]} />
      <Cross at={[1015, 262]} />
    </g>
  </g>
);

const gridX = Array.from({ length: 18 }, (_, i) => 488 + i * 65.25);
const gridY = [546, 611, 677, 742, 807, 872, 938];

const Canvas: FC = () => (
  <svg role="img" aria-label="Board canvas" viewBox="425 182 1195 779" preserveAspectRatio="xMinYMin slice" className="block h-full w-full bg-[#001023]">
    <Board />
    <rect x="425" y="484" width="1195" height="477" fill="#001023" />
    {gridY.map((y) =>
      gridX.map((x, i) => (
        <rect
          key={`${x}-${y}`}
          x={Math.floor(x) - (i % 10 === 5 ? 1 : 0)}
          y={y === 807 ? y - 1 : y}
          width={i % 10 === 5 ? 3 : 1}
          height={y === 807 ? 3 : 1}
          fill="#8a9296"
        />
      )),
    )}
    <path d="M950 735.500h80M990.500 695v80" stroke="#9aa0a8" />
    <path d="M425 858.500H1620M425 884.500H1620M945.500 859v25M1598.500 859v25" stroke="#6e3f6c" strokeWidth="3" />
    <path d="M425 858.500H1620M425 884.500H1620M945.500 859v25M1598.500 859v25" stroke="#cc70b0" />
    <g fill="#c26aa6" fontFamily="'Open Sans','Noto Sans',sans-serif" fontSize="26" textAnchor="middle">
      <text x="628" y="881">2</text>
      <text x="1281" y="881">3</text>
    </g>
  </svg>
);

/* ---------- window ---------- */

const stats = [
  ["Pads", "1639"],
  ["Vias", "498"],
  ["Track Segments", "3817"],
  ["Nets", "379"],
  ["Unrouted", "0"],
];

const statusCells = ["Z 3.65", "X 113.5000  Y 194.5000", "dx 113.5000  dy 194.5000  di...", "grid 0.5000", "mm"];

const App: FC = () => (
  <div className="flex h-screen flex-col overflow-hidden bg-[#f0f0f0] font-['Open_Sans','Noto_Sans',sans-serif] text-[16px] leading-5 text-black">
    <header className="flex h-[29px] shrink-0 items-center gap-[5px] bg-[#0078d7] pb-0.5 pl-0.5 text-white">
      <Icon name="board" size={20} />
      <h1>*hackrf-one — PCB Editor</h1>
    </header>

    <nav className="flex h-6 shrink-0 bg-white">
      {["File", "Edit", "View", "Place", "Route", "Inspect"].map((m) => (
        <button key={m} className="px-[9px] first:pl-[7px]">
          {m}
        </button>
      ))}
      <div className="relative">
        <button className="h-full border border-[#99d1ff] bg-[#cce8ff] px-2">Tools</button>
        <ToolsMenu />
      </div>
      {["Preferences", "Help"].map((m) => (
        <button key={m} className="px-[9px]">
          {m}
        </button>
      ))}
    </nav>

    <div className="flex h-[47px] shrink-0 items-center pb-0.5 pl-1">
      <ToolButton label="Save"><Icon name="save" size={32} /></ToolButton>
      <Sep />
      <ToolButton label="Board setup"><Icon name="boardSetup" size={32} /></ToolButton>
      <Sep />
      <ToolButton label="Page settings"><Icon name="page" size={32} /></ToolButton>
      <ToolButton label="Print"><Icon name="print" size={32} /></ToolButton>
      <ToolButton label="Plot"><Icon name="plot" size={32} /></ToolButton>
      <Sep />
      <ToolButton label="Undo"><Icon name="undo" size={30} /></ToolButton>
      <ToolButton label="Redo"><Icon name="redo" size={30} /></ToolButton>
      <Sep />
      <ToolButton label="Find"><Search size={28} /></ToolButton>
      <Sep />
      <ToolButton label="Redraw"><RefreshCw size={28} /></ToolButton>
      <ToolButton label="Zoom in"><ZoomIn size={28} /></ToolButton>
      <ToolButton label="Zoom out"><ZoomOut size={28} /></ToolButton>
      <ToolButton label="Zoom to fit"><Search size={28} /></ToolButton>
      <ToolButton label="Zoom to objects"><Search size={28} /></ToolButton>
      <ToolButton label="Zoom to selection"><Search size={28} /></ToolButton>
      <Sep />
      <ToolButton label="Rotate counterclockwise"><Icon name="rotateCcw" size={32} /></ToolButton>
      <ToolButton label="Rotate clockwise"><Icon name="rotateCw" size={32} /></ToolButton>
      <ToolButton label="Mirror vertically"><Icon name="mirrorV" size={32} /></ToolButton>
      <ToolButton label="Mirror horizontally"><Icon name="mirrorH" size={32} /></ToolButton>
      <ToolButton label="Group"><Icon name="group" size={32} /></ToolButton>
      <ToolButton label="Ungroup"><Icon name="ungroup" size={32} /></ToolButton>
      <ToolButton label="Lock"><Icon name="lock" size={32} /></ToolButton>
      <ToolButton label="Unlock"><Icon name="unlock" size={32} /></ToolButton>
      <Sep />
      <ToolButton label="Footprint editor"><Icon name="footprintEditor" size={32} /></ToolButton>
      <ToolButton label="Footprint library browser"><Icon name="library" size={32} /></ToolButton>
      <ToolButton label="3D viewer"><Icon name="chip3d" size={32} /></ToolButton>
      <Sep />
      <ToolButton label="Update PCB from schematic"><Icon name="updatePcb" size={32} /></ToolButton>
      <ToolButton label="Design rules checker"><Icon name="checklist" size={32} /></ToolButton>
      <Sep />
      <ToolButton label="Schematic editor"><Icon name="schematic" size={32} /></ToolButton>
      <Combo label="Layer preset" value="< Default >" className="mx-px h-7 w-[114px]" />
      <Sep />
      <ToolButton label="Scripting console"><Icon name="console" size={32} /></ToolButton>
      <Sep />
      <ToolButton label="Fabrication toolkit"><Icon name="fabrication" size={24} /></ToolButton>
      <ToolButton label="Gerber to order"><Icon name="gerber" size={24} /></ToolButton>
    </div>

    <div className="flex h-[42px] shrink-0 items-center pb-0.5 pl-1.5">
      <Combo label="Track width" value="Track: use netclass width" className="h-7 w-[238px]" />
      <ToolButton label="Automatic track width"><Icon name="trackWidth" size={32} /></ToolButton>
      <WideSep />
      <Combo label="Via size" value="Via: use netclass sizes" className="h-7 w-[238px]" />
      <WideSep />
      <div className="relative h-[26px] w-[266px] shrink-0">
        <select aria-label="Layer" className="h-full w-full appearance-none border border-[#7a7a7a] bg-white" defaultValue="">
          <option value=""></option>
        </select>
        <ChevronDown size={14} strokeWidth={1.5} className="pointer-events-none absolute right-1 top-1.5 text-[#444]" />
      </div>
      <ToolButton label="Layer pair"><Icon name="layerPair" size={32} /></ToolButton>
      <WideSep />
      <Combo label="Grid" value="0.5000 mm (19.69 mils)" className="h-7 w-[228px]" />
      <WideSep />
      <Combo label="Zoom" value="Zoom Auto" className="h-7 w-[129px]" />
      <WideSep />
      <label className="flex items-center gap-1 whitespace-nowrap">
        <input type="checkbox" className="h-4 w-4 appearance-none border border-[#333] bg-white" />
        Override locks
      </label>
    </div>

    <main className="flex min-h-0 flex-1">
      <aside className="flex w-[375px] shrink-0 flex-col">
        <h2 className="h-[26px] bg-[#b9b9b9] pl-1 leading-6">Properties</h2>
        <p className="h-[31px] pl-[5px] leading-[30px]">No objects selected</p>
        <div className="flex-1 border border-[#abadb3] bg-white" />
      </aside>
      <div className="w-[5px] shrink-0 bg-[#dcdcde]" />
      <div className="flex w-[44px] shrink-0 flex-col items-center pt-[15px]">
        <ToolButton label="Grid"><Search size={28} /></ToolButton>
        <ToolButton label="Grid overrides"><Search size={28} /></ToolButton>
        <ToolButton label="Polar coordinates"><Search size={28} /></ToolButton>
        <ToolButton label="Inches"><Search size={28} /></ToolButton>
        <ToolButton label="Mils"><Search size={28} /></ToolButton>
        <ToolButton label="Millimeters"><Search size={28} /></ToolButton>
        <RowSep />
        <ToolButton label="Crosshair"><Search size={28} /></ToolButton>
        <ToolButton label="Ratsnest"><Search size={28} /></ToolButton>
        <RowSep />
        <ToolButton label="Contrast"><Search size={28} /></ToolButton>
        <ToolButton label="Net colors"><Search size={28} /></ToolButton>
        <RowSep />
        <ToolButton label="Show filled zones"><Icon name="zone" size={32} /></ToolButton>
        <ToolButton label="Show zone outlines"><Icon name="zoneOutline" size={32} /></ToolButton>
        <RowSep />
        <ToolButton label="Sketch pads"><Icon name="footprintOff" size={32} /></ToolButton>
        <ToolButton label="Sketch vias"><Icon name="viaOff" size={32} /></ToolButton>
        <ToolButton label="Sketch tracks"><Icon name="trackOff" size={32} /></ToolButton>
        <RowSep />
        <ToolButton label="Appearance"><Icon name="layers" size={32} /></ToolButton>
        <ToolButton label="Properties"><Icon name="toolsCross" size={32} /></ToolButton>
      </div>
      <section className="flex min-w-0 flex-1 flex-col border-l border-[#a0a0a0]">
        <div className="flex h-10 shrink-0 items-center border-b border-[#b0b0a0] bg-[#ffffe1] pb-0.5 pl-12 pr-[3px] font-['Noto_Sans','Open_Sans',sans-serif] text-[15px]">
          <p className="flex-1 truncate">This file was created by an older version of KiCad. It will be converted to the new format when saved.</p>
          <button aria-label="Close" className="flex h-5 w-5 items-center justify-center rounded-sm border border-[#5a2020] bg-linear-to-b from-[#e0a8a0] to-[#b8493a]">
            <svg width="14" height="14" viewBox="0 0 14 14">
              <path d="M3 3l8 8M11 3l-8 8" stroke="#444" strokeWidth="5" />
              <path d="M3 3l8 8M11 3l-8 8" stroke="#f4f4f4" strokeWidth="3" />
            </svg>
          </button>
        </div>
        <div className="min-h-0 flex-1">
          <Canvas />
        </div>
      </section>
    </main>

    <dl className="flex h-[42px] shrink-0 gap-[39px] border-b border-[#d4d4d4] pl-[15px]">
      {stats.map(([name, value]) => (
        <div key={name}>
          <dt>{name}</dt>
          <dd>{value}</dd>
        </div>
      ))}
    </dl>
    <footer className="flex h-[27px] shrink-0 items-center whitespace-pre pl-0.5 font-['Noto_Sans','Open_Sans',sans-serif] text-[15px] leading-6">
      <span className="w-[236px] shrink-0">Export manufacturing files (g...</span>
      {statusCells.map((cell) => (
        <span key={cell} className="w-[234px] shrink-0">
          {cell}
        </span>
      ))}
    </footer>
  </div>
);

export default App;
